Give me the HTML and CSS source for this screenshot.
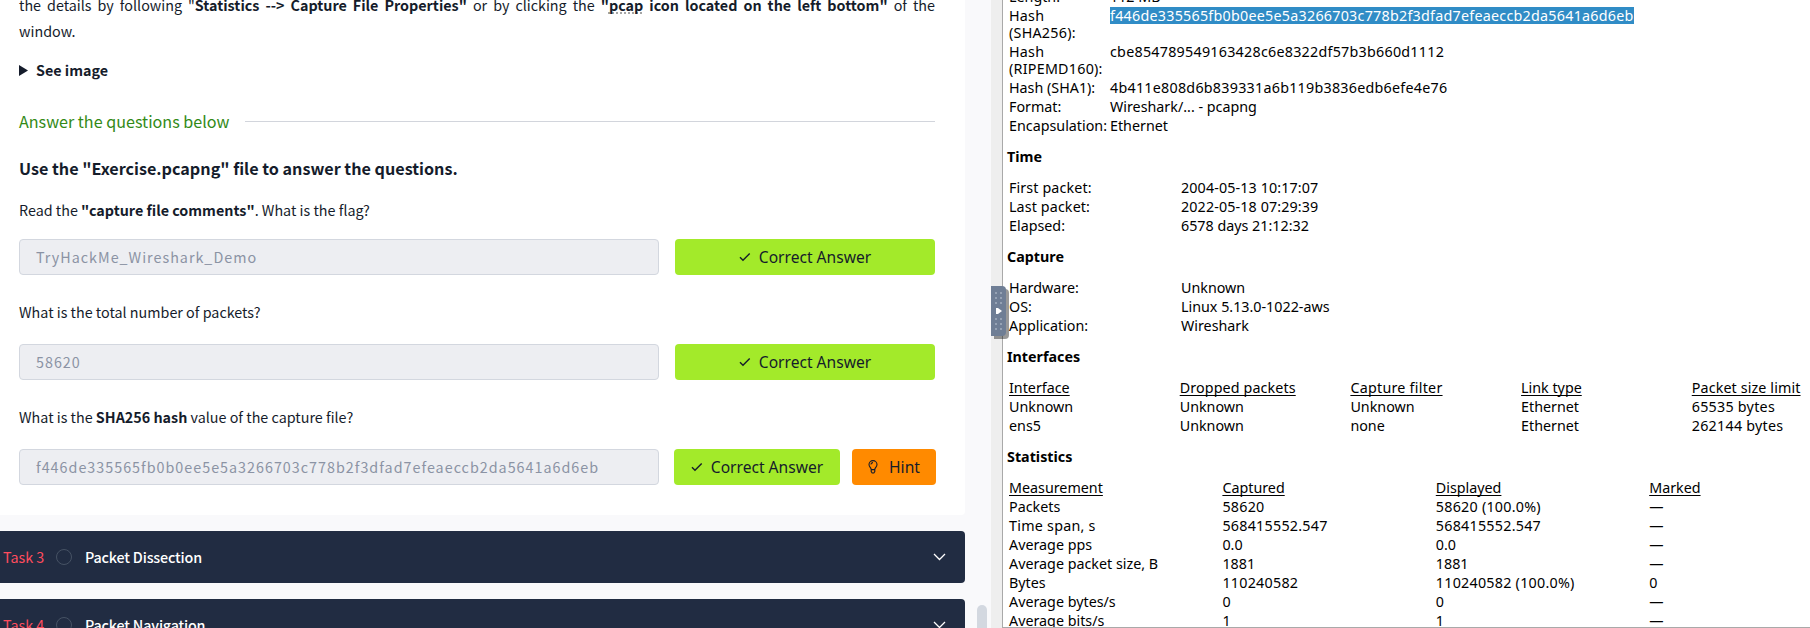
FILE: index.html
```html
<!DOCTYPE html>
<html lang="en">
<head>
<meta charset="utf-8">
<title>Wireshark room</title>
<link rel="stylesheet" href="styles.css">
</head>
<body>
<main class="room">
  <section class="card">
    <p class="intro">the details by following "<b>Statistics --&gt; Capture File Properties"</b> or by clicking the <b>"<span class="misspelt">pcap</span> icon located on the left bottom"</b> of the window.</p>
    <div class="see"><svg width="9" height="11" viewBox="0 0 9 11"><path d="M0 0L9 5.5L0 11z" fill="#151c2b"/></svg><b>See image</b></div>
    <div class="divider"><span>Answer the questions below</span></div>
    <h2 class="lead">Use the "Exercise.pcapng" file to answer the questions.</h2>
    <p class="question">Read the <b>"capture file comments"</b>. What is the flag?</p>
    <div class="answer">
      <div class="field">TryHackMe_Wireshark_Demo</div>
      <div class="btn correct"><svg width="12" height="10" viewBox="0 0 12 10"><path class="ink" d="M1 5.2L4 8.3L10.7 1.5"/></svg><span>Correct Answer</span></div>
    </div>
    <p class="question">What is the total number of packets?</p>
    <div class="answer">
      <div class="field">58620</div>
      <div class="btn correct"><svg width="12" height="10" viewBox="0 0 12 10"><path class="ink" d="M1 5.2L4 8.3L10.7 1.5"/></svg><span>Correct Answer</span></div>
    </div>
    <p class="question">What is the <b>SHA256 hash</b> value of the capture file?</p>
    <div class="answer with-hint">
      <div class="field">f446de335565fb0b0ee5e5a3266703c778b2f3dfad7efeaeccb2da5641a6d6eb</div>
      <div class="btn correct"><svg width="12" height="10" viewBox="0 0 12 10"><path class="ink" d="M1 5.2L4 8.3L10.7 1.5"/></svg><span>Correct Answer</span></div>
      <div class="btn hint"><svg width="10" height="14" viewBox="0 0 10 14"><path class="ink thin" d="M3.2 9.6C3.2 7.7 1 7 1 4.6a4 4 0 0 1 8 0C9 7 6.8 7.7 6.8 9.6zM3.2 9.6v2L4.2 13h1.6l1-1.4v-2M3 4.6a2 2 0 0 1 2-2"/></svg><span>Hint</span></div>
    </div>
  </section>
  <section class="task">
    <span class="num">Task 3</span><i class="ring"></i><span class="name">Packet Dissection</span>
    <svg width="13" height="8" viewBox="0 0 13 8"><path class="chev" d="M1 1l5.5 5.5L12 1"/></svg>
  </section>
  <section class="task">
    <span class="num">Task 4</span><i class="ring"></i><span class="name">Packet Navigation</span>
    <svg width="13" height="8" viewBox="0 0 13 8"><path class="chev" d="M1 1l5.5 5.5L12 1"/></svg>
  </section>
  <div class="thumb"></div>
</main>
<aside class="gutter">
  <div class="handle">
    <svg width="15" height="50" viewBox="0 0 15 50">
      <g class="dots"><path d="M5 6v12M10 6v12M5 32v12M10 32v12"/></g>
      <path d="M5 22h2l4 3l-4 3h-2z" fill="#fff"/>
    </svg>
  </div>
</aside>
<section class="props">
  <div class="rows file">
    <span>Length:</span><span>112 MB</span>
    <span class="digits">Hash<br>(SHA256):</span><span><mark class="digits">f446de335565fb0b0ee5e5a3266703c778b2f3dfad7efeaeccb2da5641a6d6eb</mark></span>
    <span class="digits">Hash<br>(RIPEMD160):</span><span class="digits">cbe854789549163428c6e8322df57b3b660d1112</span>
    <span>Hash (SHA1):</span><span class="digits">4b411e808d6b839331a6b119b3836edb6efe4e76</span>
    <span>Format:</span><span>Wireshark/... - pcapng</span>
    <span>Encapsulation:</span><span>Ethernet</span>
  </div>
  <h3>Time</h3>
  <div class="rows pair">
    <span class="date">First packet:</span><span class="date">2004-05-13 10:17:07</span>
    <span class="date">Last packet:</span><span class="date">2022-05-18 07:29:39</span>
    <span>Elapsed:</span><span>6578 days 21:12:32</span>
  </div>
  <h3>Capture</h3>
  <div class="rows pair">
    <span>Hardware:</span><span>Unknown</span>
    <span>OS:</span><span>Linux 5.13.0-1022-aws</span>
    <span>Application:</span><span>Wireshark</span>
  </div>
  <h3>Interfaces</h3>
  <div class="rows five">
    <u>Interface</u><u class="date">Dropped packets</u><u class="digits">Capture filter</u><u>Link type</u><u class="date">Packet size limit</u>
    <span>Unknown</span><span>Unknown</span><span>Unknown</span><span>Ethernet</span><span class="digits">65535 bytes</span>
    <span>ens5</span><span>Unknown</span><span>none</span><span>Ethernet</span><span class="digits">262144 bytes</span>
  </div>
  <h3>Statistics</h3>
  <div class="rows four">
    <u>Measurement</u><u>Captured</u><u>Displayed</u><u>Marked</u>
    <span>Packets</span><span class="digits">58620</span><span class="digits">58620 (100.0%)</span><span>—</span>
    <span class="digits">Time span, s</span><span class="digits">568415552.547</span><span class="digits">568415552.547</span><span>—</span>
    <span>Average pps</span><span>0.0</span><span>0.0</span><span>—</span>
    <span>Average packet size, B</span><span>1881</span><span>1881</span><span>—</span>
    <span>Bytes</span><span class="digits">110240582</span><span class="digits">110240582 (100.0%)</span><span>0</span>
    <span>Average bytes/s</span><span>0</span><span>0</span><span>—</span>
    <span>Average bits/s</span><span>1</span><span>1</span><span>—</span>
  </div>
</section>
</body>
</html>
```
FILE: styles.css
```css
* { box-sizing: border-box; margin: 0; padding: 0; }
body {
  display: flex; width: 1810px; height: 628px; overflow: hidden;
  background: #fff; color: #151c2b;
  font-family: "Noto Sans CJK SC", "Noto Sans", sans-serif; font-size: 14.33px;
}
svg { display: block; flex: none; }
.room { position: relative; width: 991px; height: 628px; overflow: hidden; background: #f9f9fb; }
.card { width: 965px; height: 515px; padding: 0 30px 0 19px; background: #fff; border-radius: 0 0 4px 0; overflow: hidden; }
.intro { margin-top: -8px; line-height: 26px; text-align: justify; }
.misspelt { text-decoration: underline dotted #a5a5a5 2px; text-underline-offset: 1px; text-decoration-skip-ink: none; }
.see { display: flex; align-items: center; gap: 8px; height: 26px; margin-top: 13px; }
.see b { line-height: 25px; padding-bottom: 1px; }
.divider { display: flex; align-items: center; gap: 16px; height: 30px; margin-top: 23px; font-size: 16.13px; color: #338a17; }
.divider::after { content: ""; flex: 1; height: 1px; background: #d2d5dc; }
.lead { margin-top: 17px; line-height: 30px; font-size: 16.17px; }
.question { margin-top: 11px; line-height: 26px; height: 45px; white-space: nowrap; }
.answer { display: flex; gap: 16px; height: 36px; margin-bottom: 13px; }
.lead + .question { margin-top: 14px; height: 42px; }
.answer + .question { margin-top: 24px; height: 45px; }
.field {
  width: 640px; flex: none; padding-left: 16px; line-height: 33px; border: 1px solid #d3d7df; border-radius: 4px;
  background: #edeef2; color: #8b93a4; letter-spacing: 1px; white-space: nowrap;
}
.btn {
  display: flex; align-items: center; justify-content: center; gap: 8px; border-radius: 4px; flex: 1;
  font-family: "Noto Sans", sans-serif; font-size: 15.6px; color: #151c2b;
}
.correct { background: #a3ea2a; }
.with-hint { gap: 0; width: 917px; }
.with-hint .correct { flex: none; width: 166px; margin: 0 12px 0 15px; }
.hint { flex: none; width: 84px; gap: 11px; padding-right: 0; background: #ff8a00; }
.ink { fill: none; stroke: #151c2b; stroke-width: 1.4; }
.thin { stroke-width: 1.1; }
.task {
  display: flex; align-items: center; width: 965px; height: 52px; margin-top: 16px; padding: 0 19px 0 3px;
  background: #212c42; border-radius: 0 4px 4px 0; color: #fff;
}
.num { width: 53px; padding-bottom: 2px; color: #ff4c5e; }
.ring { width: 16px; height: 16px; margin-right: 13px; border: 1.5px solid #465264; border-radius: 50%; }
.name { flex: 1; padding-bottom: 2px; font-weight: 500; letter-spacing: -.17px; }
.chev { fill: none; stroke: #fff; stroke-width: 1.3; }
.thumb { position: absolute; left: 977px; top: 605px; width: 10px; height: 40px; border-radius: 5px; background: #d3d8e0; }
.gutter { position: relative; width: 12px; background: #eee; border-right: 1px solid #a9a9a9; }
.handle {
  position: absolute; left: 0; top: 286px; width: 15px; height: 50px; background: #6f7e95;
  border-radius: 0 4px 4px 0; box-shadow: 3px 3px 0 rgba(0, 0, 0, .4); clip-path: inset(0 -4px -4px 0);
}
.dots { stroke: #96a2b4; stroke-width: 2; stroke-dasharray: 2 3; }
.props {
  flex: 1; height: 628px; padding-left: 4px; overflow: hidden; border-bottom: 1px solid #a9a9a9;
  color: #000; font-family: "Noto Sans", sans-serif; font-size: 14.3px; line-height: 17px;
}
.rows { display: grid; row-gap: 2px; padding-left: 2px; justify-content: start; justify-items: start; white-space: nowrap; }
.file { margin-top: -12px; grid-template-columns: 101px auto; }
.pair { grid-template-columns: 172px auto; }
.five { grid-template-columns: repeat(5, 170.7px); }
.four { grid-template-columns: repeat(4, 213.4px); }
.digits { letter-spacing: .25px; }
.date { letter-spacing: .12px; }
.props h3 { margin: 14px 0; font-size: 14.3px; line-height: 17px; }
.props u { text-decoration-skip-ink: none; text-underline-offset: 2px; text-decoration-thickness: 1px; }
mark { display: block; background: #308cc6; color: #fff; }
```
